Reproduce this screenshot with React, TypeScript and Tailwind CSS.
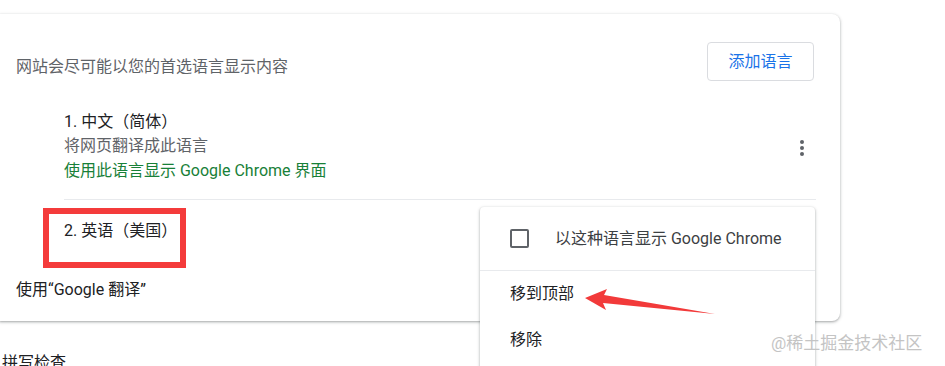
const cardShadow = "shadow-[0_1px_2px_rgba(60,64,67,0.3),0_1px_3px_1px_rgba(60,64,67,0.15)]"

function MoreDots() {
  return (
    <div className="flex w-5 flex-col items-center gap-[2px]">
      <span className="h-[4px] w-[4px] rounded-full bg-[#5f6368]" />
      <span className="h-[4px] w-[4px] rounded-full bg-[#5f6368]" />
      <span className="h-[4px] w-[4px] rounded-full bg-[#5f6368]" />
    </div>
  )
}

function LanguageMenu() {
  return (
    <div className={`absolute left-[480px] top-[207px] w-[335px] rounded-[4px] bg-white pb-4 ${cardShadow}`}>
      <div className="flex h-[64px] items-center border-b border-[#e8eaed] pl-[30px]">
        <span className="h-[19px] w-[19px] rounded-[2px] border-2 border-[#5f6368]" />
        <span className="ml-[26px] text-[#3c4043]">以这种语言显示 Google Chrome</span>
      </div>
      <div className="flex h-[46px] items-center pl-[30px]">移到顶部</div>
      <div className="flex h-[46px] items-center pl-[30px]">移除</div>
    </div>
  )
}

function Arrow() {
  return (
    <svg className="absolute left-[580px] top-[284px]" width="140" height="34" viewBox="0 0 140 34">
      {/* tip at (5,14), tail at (135,30) */}
      <polygon
        points="5,14 27,5 24,11 135,30 23,19 26,26"
        fill="#f23a3a"
      />
    </svg>
  )
}

export default function App() {
  return (
    <div className="relative h-[366px] w-[945px] overflow-hidden bg-white font-[Roboto,'Noto_Sans_CJK_SC',sans-serif] text-[16px] text-[#202124]">
      <div className="pt-[14px]">
        <div className={`w-[840px] rounded-r-[8px] bg-white ${cardShadow}`}>
          <div className="flex items-start justify-between pl-4 pr-[26px] pt-[28px]">
            <p className="mt-[13px] leading-6 text-[#5f6368]">网站会尽可能以您的首选语言显示内容</p>
            <button className="h-[39px] w-[107px] rounded-[4px] border border-[#dadce0] bg-white text-[#1a73e8]">
              添加语言
            </button>
          </div>

          <div className="ml-16 mr-6 mt-[29px] flex items-center justify-between border-b border-[#e8eaed] pb-4">
            <div className="leading-6">
              <p>1. 中文（简体）</p>
              <p className="text-[#5f6368]">将网页翻译成此语言</p>
              <p className="mt-px text-[#188038]">使用此语言显示 Google Chrome 界面</p>
            </div>
            <div className="mr-[4px] mt-[2px]">
              <MoreDots />
            </div>
          </div>

          <div className="ml-16 pt-[19px] leading-6">
            <p>2. 英语（美国）</p>
          </div>

          <p className="mt-[35px] pb-[19px] pl-4 leading-6">使用“Google 翻译”</p>
        </div>
      </div>

      <p className="mt-[30px] pl-[2px] leading-6 text-[#202124]">拼写检查</p>

      <div className="absolute left-[43px] top-[208px] h-[60px] w-[143px] border-[6px] border-[#f43b3b]" />

      <LanguageMenu />
      <Arrow />

      <span className="absolute left-[771px] top-[331px] text-[17px] leading-6 text-[#c4c4c4]">@稀土掘金技术社区</span>
    </div>
  )
}
